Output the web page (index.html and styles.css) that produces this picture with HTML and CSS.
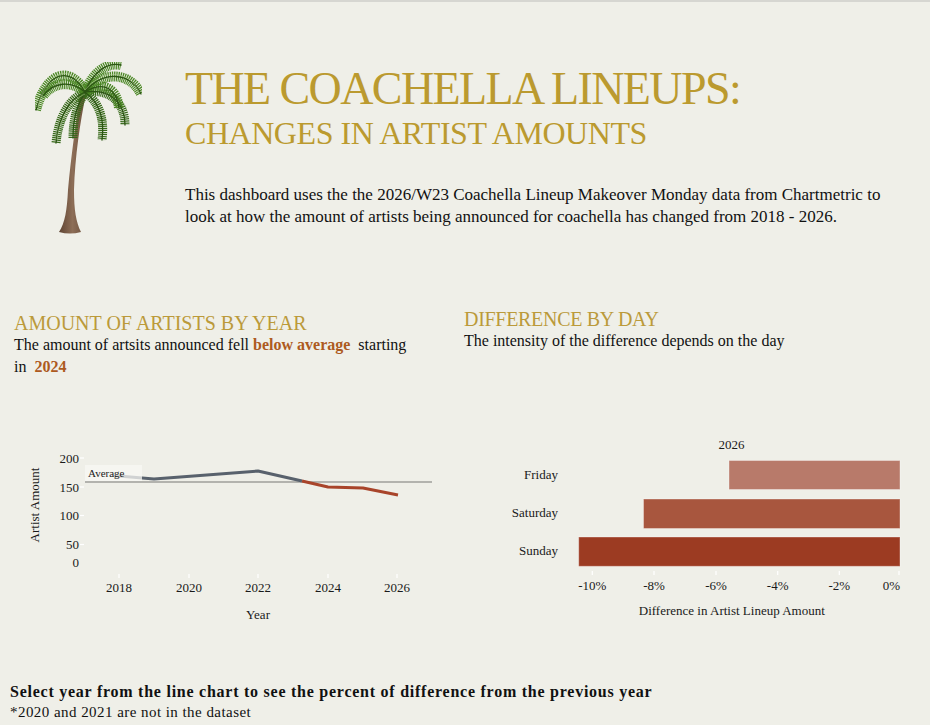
FILE: index.html
```html
<!DOCTYPE html>
<html lang="en">
<head>
<meta charset="utf-8">
<title>The Coachella Lineups</title>
<link rel="stylesheet" href="styles.css">
</head>
<body>
<div class="page">
  <header class="header">
    <svg class="palm" viewBox="0 0 107 172" width="107" height="172" aria-hidden="true">
      <defs>
        <linearGradient id="trunk" x1="0" x2="1" y1="0" y2="0">
          <stop offset="0" stop-color="#5e4433"/>
          <stop offset="0.5" stop-color="#8d6e57"/>
          <stop offset="1" stop-color="#6a4e3b"/>
        </linearGradient>
      </defs>
      <path d="M45,30 C41,60 36,95 33,128 C32,148 30,161 24,170 Q35,173 46,170 C41,160 39,148 39,128 C40,95 45,60 51,32 Z" fill="url(#trunk)"/>
      <g fill="none">
        <g stroke="#37691a" stroke-width="9" stroke-dasharray="1.2 0.8">
          <path d="M50,30 C36,36 24,52 21,81"/>
          <path d="M50,31 C42,42 38,58 38,76"/>
          <path d="M51,31 C63,40 70,55 67,78"/>
          <path d="M50,30 C74,26 90,40 90,63"/>
        </g>
        <g stroke="#4a8724" stroke-width="10" stroke-dasharray="1.2 0.8">
          <path d="M50,30 C36,4 12,8 1,48"/>
          <path d="M50,30 C58,10 72,0 86,3"/>
          <path d="M50,30 C68,8 95,10 106,32"/>
          <path d="M50,30 C36,18 18,20 8,34"/>
          <path d="M50,30 C70,18 82,28 84,46"/>
        </g>
        <g stroke="#2c5514" stroke-width="1.3" stroke-linecap="round">
          <path d="M50,30 C36,36 24,52 21,81"/>
          <path d="M50,31 C42,42 38,58 38,76"/>
          <path d="M51,31 C63,40 70,55 67,78"/>
          <path d="M50,30 C74,26 90,40 90,63"/>
          <path d="M50,30 C36,4 12,8 1,48"/>
          <path d="M50,30 C58,10 72,0 86,3"/>
          <path d="M50,30 C68,8 95,10 106,32"/>
          <path d="M50,30 C36,18 18,20 8,34"/>
          <path d="M50,30 C70,18 82,28 84,46"/>
        </g>
        <g stroke="#b6d198" stroke-width="0.7" opacity="0.75">
          <path d="M50,28 C36,2 13,6 3,44"/>
          <path d="M50,28 C68,6 94,8 104,30"/>
          <path d="M50,32 C37,38 25,54 22,78"/>
        </g>
      </g>
    </svg>
    <div class="intro">
      <h1 class="title-main">THE COACHELLA LINEUPS:</h1>
      <h2 class="title-sub">CHANGES IN ARTIST AMOUNTS</h2>
      <p class="description">This dashboard uses the the 2026/W23 Coachella Lineup Makeover Monday data from Chartmetric to look at how the amount of artists being announced for coachella has changed from 2018 - 2026.</p>
    </div>
  </header>

  <section class="charts">
    <div class="panel panel-left">
      <h3 class="panel-title">AMOUNT OF ARTISTS BY YEAR</h3>
      <p class="panel-text">The amount of artsits announced fell <b class="hl">below average</b>&nbsp; starting in&nbsp; <b class="hl">2024</b></p>
      <svg class="chart chart-line" viewBox="0 0 450 190" width="450" height="190">
        <g class="ticks">
          <line x1="80" y1="16" x2="84" y2="16"/>
          <line x1="80" y1="45" x2="84" y2="45"/>
          <line x1="80" y1="73.5" x2="84" y2="73.5"/>
          <line x1="80" y1="102.5" x2="84" y2="102.5"/>
          <line x1="119" y1="132" x2="119" y2="136"/>
          <line x1="189" y1="132" x2="189" y2="136"/>
          <line x1="258" y1="132" x2="258" y2="136"/>
          <line x1="328" y1="132" x2="328" y2="136"/>
          <line x1="397" y1="132" x2="397" y2="136"/>
        </g>
        <g class="axis-label" text-anchor="end">
          <text x="79" y="20.5">200</text>
          <text x="79" y="49.5">150</text>
          <text x="79" y="78">100</text>
          <text x="79" y="107">50</text>
          <text x="79" y="124.5">0</text>
        </g>
        <g class="axis-label" text-anchor="middle">
          <text x="119" y="150">2018</text>
          <text x="189" y="150">2020</text>
          <text x="258" y="150">2022</text>
          <text x="328" y="150">2024</text>
          <text x="397" y="150">2026</text>
          <text x="258" y="177">Year</text>
        </g>
        <text class="axis-label" x="39" y="63" text-anchor="middle" transform="rotate(-90 39 63)">Artist Amount</text>
        <line class="avg-line" x1="85" y1="40" x2="432" y2="40"/>
        <polyline class="series-grey" points="113,33.5 154,37 258,29 302,39"/>
        <polyline class="series-red" points="302,39 328,45 363,46 398,53"/>
        <rect class="avg-box" x="85" y="23" width="57" height="16"/>
        <text class="avg-text" x="88" y="35">Average</text>
      </svg>
    </div>

    <div class="panel panel-right">
      <h3 class="panel-title">DIFFERENCE BY DAY</h3>
      <p class="panel-text">The intensity of the difference depends on the day</p>
      <svg class="chart chart-bar" viewBox="0 0 470 190" width="470" height="190">
        <text class="axis-label" x="271.5" y="17" text-anchor="middle">2026</text>
        <g class="axis-label" text-anchor="end">
          <text x="98" y="46.5">Friday</text>
          <text x="98" y="85">Saturday</text>
          <text x="98" y="123">Sunday</text>
        </g>
        <rect class="bar" x="269" y="28.5" width="171" height="29" fill="#b87a6a"/>
        <rect class="bar" x="183.5" y="67" width="256.5" height="29.5" fill="#a8563e"/>
        <rect class="bar" x="118.7" y="105" width="321.3" height="29.3" fill="#9c3b22"/>
        <g class="ticks">
          <line x1="132.3" y1="139" x2="132.3" y2="143"/>
          <line x1="194" y1="139" x2="194" y2="143"/>
          <line x1="256" y1="139" x2="256" y2="143"/>
          <line x1="317.7" y1="139" x2="317.7" y2="143"/>
          <line x1="379.3" y1="139" x2="379.3" y2="143"/>
          <line x1="439" y1="139" x2="439" y2="143"/>
        </g>
        <g class="axis-label" text-anchor="middle">
          <text x="132.3" y="158">-10%</text>
          <text x="194" y="158">-8%</text>
          <text x="256" y="158">-6%</text>
          <text x="317.7" y="158">-4%</text>
          <text x="379.3" y="158">-2%</text>
          <text x="440" y="158" text-anchor="end">0%</text>
          <text x="271.8" y="183">Difference in Artist Lineup Amount</text>
        </g>
      </svg>
    </div>
  </section>

  <footer class="footer">
    <p class="footer-note">Select year from the line chart to see the percent of difference from the previous year</p>
    <p class="footer-small">*2020 and 2021 are not in the dataset</p>
  </footer>
</div>
</body>
</html>
```

FILE: styles.css
```css
* { box-sizing: border-box; }

html, body {
  margin: 0;
  padding: 0;
  background: #efefe8;
}

body {
  font-family: "Liberation Serif", "Times New Roman", serif;
  color: #111;
}

.page {
  width: 930px;
  height: 725px;
  border-top: 2px solid #d6d6d1;
  overflow: hidden;
}

/* Header */
.header {
  display: flex;
  align-items: flex-start;
  padding: 60px 0 0 35px;
  height: 234px;
}

.palm {
  display: block;
  flex: none;
}

.intro {
  margin-left: 43px;
}

.title-main {
  margin: 4px 0 0;
  font-size: 46px;
  line-height: 46px;
  font-weight: normal;
  letter-spacing: -1.6px;
  color: #bb9a2f;
  white-space: nowrap;
}

.title-sub {
  margin: 5px 0 0;
  font-size: 32px;
  line-height: 32px;
  font-weight: normal;
  letter-spacing: -0.45px;
  color: #bb9a2f;
  white-space: nowrap;
}

.description {
  margin: 35px 0 0;
  width: 700px;
  font-size: 17px;
  line-height: 22px;
  color: #111;
}

/* Charts */
.charts {
  display: grid;
  grid-template-columns: 450px 480px;
  align-items: start;
  margin-top: 72px;
}

.panel-left {
  padding-top: 4px;
}

.panel-title {
  margin: 0 0 0 14px;
  font-size: 20px;
  line-height: 22px;
  font-weight: normal;
  color: #bb9a3a;
  white-space: nowrap;
}

.panel-right .panel-title {
  letter-spacing: -0.3px;
}

.panel-text {
  margin: 0 0 0 14px;
  width: 412px;
  font-size: 16px;
  line-height: 22px;
  color: #111;
}

.hl {
  font-weight: bold;
  color: #ad5a1e;
}

.chart {
  display: block;
}

.chart-line {
  margin-top: 64px;
}

.chart-bar {
  margin-top: 80px;
  margin-left: 10px;
}

.axis-label {
  font-family: "Liberation Serif", "Times New Roman", serif;
  font-size: 13px;
  fill: #1a1a1a;
}

.ticks line {
  stroke: #ffffff;
  stroke-width: 1.2;
}

.avg-line {
  stroke: #b3b3ae;
  stroke-width: 2;
}

.series-grey {
  fill: none;
  stroke: #58616c;
  stroke-width: 3;
  stroke-linejoin: round;
}

.series-red {
  fill: none;
  stroke: #a8442a;
  stroke-width: 3;
  stroke-linejoin: round;
}

.avg-box {
  fill: #f8f8f4;
  opacity: 0.75;
}

.avg-text {
  font-family: "Liberation Serif", "Times New Roman", serif;
  font-size: 11px;
  fill: #222;
}

.bar {
  stroke: rgba(255, 255, 255, 0.35);
  stroke-width: 1;
}

/* Footer */
.footer {
  margin-top: 49px;
  padding-left: 10px;
}

.footer-note {
  margin: 0;
  font-size: 16px;
  line-height: 21px;
  font-weight: bold;
  letter-spacing: 0.75px;
  color: #111;
  white-space: nowrap;
}

.footer-small {
  margin: 0;
  font-size: 15px;
  line-height: 21px;
  letter-spacing: 0.45px;
  color: #111;
}
```
